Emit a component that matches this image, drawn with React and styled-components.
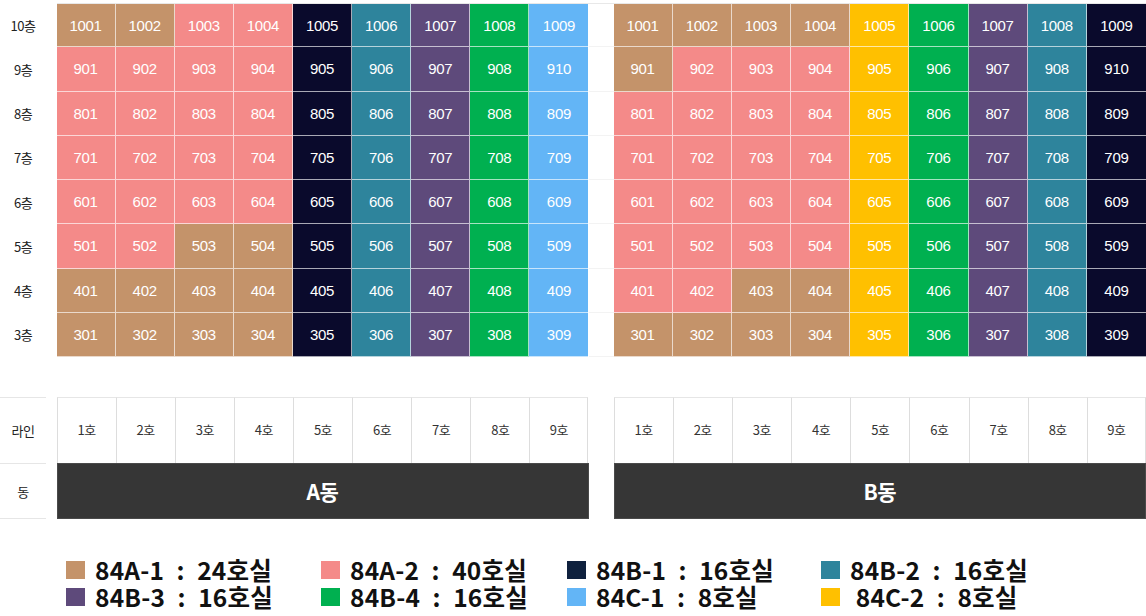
import React from "react";
import styled, { createGlobalStyle } from "styled-components";

const GlobalStyle = createGlobalStyle`
  html, body { margin: 0; padding: 0; background: #ffffff; }
  body { font-family: "Noto Sans CJK KR", "Noto Sans", sans-serif; }
`;

const COLORS = {
  A1: "#c4936a",
  A2: "#f48a89",
  B1: "#0a0a2c",
  B2: "#2e849c",
  B3: "#5e4a7b",
  B4: "#00b050",
  C1: "#63b5f6",
  C2: "#ffc000",
};

const SWATCH_COLORS = { ...COLORS, B1: "#0f213e" };

const COLS = "46px 10.5px 532px 25px 532.5px";

const Page = styled.div`
  width: 1146px;
  padding-top: 3px;
`;

const Row = styled.div`
  display: grid;
  grid-template-columns: ${COLS};
  height: ${(p) => p.$h}px;
`;

const Label = styled.div`
  display: flex;
  align-items: center;
  justify-content: center;
  font-size: 13px;
  color: #222;
  letter-spacing: -0.5px;
  border-top: ${(p) => (p.$lined ? "1px solid #e6e6e6" : "none")};
  border-bottom: ${(p) => (p.$bottom ? "1px solid #e6e6e6" : "none")};
  box-sizing: border-box;
`;

const Gap = styled.div`
  box-sizing: border-box;
  border-top: ${(p) => (p.$top ? "1px solid #e8e8e8" : "none")};
  border-bottom: ${(p) => (p.$faint ? "1px solid #f3f3f3" : "none")};
`;

const Units = styled.div`
  display: grid;
  grid-template-columns: repeat(9, 1fr);
  box-sizing: border-box;
  border-top: ${(p) => (p.$top ? "1px solid #e8e8e8" : "none")};
`;

const Unit = styled.div`
  display: flex;
  align-items: center;
  justify-content: center;
  background: ${(p) => COLORS[p.$type]};
  color: #ffffff;
  font-family: "Liberation Sans", Arial, sans-serif;
  font-size: 15px;
  letter-spacing: -0.3px;
  box-sizing: border-box;
  border-right: 1px solid rgba(255, 255, 255, 0.65);
  border-bottom: 1px solid rgba(255, 255, 255, 0.65);
  &:last-child { border-right: none; }
`;

const Spacer = styled.div`
  height: 39.5px;
`;

const LineCell = styled.div`
  display: flex;
  align-items: center;
  justify-content: center;
  font-size: 13px;
  color: #333;
  letter-spacing: -0.5px;
  padding-bottom: 1px;
  box-sizing: border-box;
  border-top: 1px solid #e6e6e6;
  border-left: 1px solid #dddddd;
  &:last-child { border-right: 1px solid #dddddd; }
`;

const DongBar = styled.div`
  display: flex;
  align-items: center;
  justify-content: center;
  background: #363636;
  border: 1px solid #4a4a4a;
  box-sizing: border-box;
  color: #ffffff;
  font-size: 21px;
  font-weight: 700;
  letter-spacing: -0.5px;
`;

const Legend = styled.div`
  display: grid;
  grid-template-columns: 255px 246px 254px auto;
  grid-auto-rows: 27px;
  padding: 37px 0 0 66px;
`;

const LegendItem = styled.div`
  display: flex;
  align-items: center;
  gap: 10px;
`;

const Swatch = styled.span`
  width: 19px;
  height: 18px;
  background: ${(p) => SWATCH_COLORS[p.$type]};
  flex: none;
`;

const LegendText = styled.span`
  font-size: 24.5px;
  font-weight: 700;
  color: #111;
  line-height: 26px;
  letter-spacing: 0.2px;
  white-space: pre;
`;

const A_ROWS = [
  ["10", ["1001", "1002", "1003", "1004", "1005", "1006", "1007", "1008", "1009"], ["A1", "A1", "A2", "A2", "B1", "B2", "B3", "B4", "C1"]],
  ["9", ["901", "902", "903", "904", "905", "906", "907", "908", "910"], ["A2", "A2", "A2", "A2", "B1", "B2", "B3", "B4", "C1"]],
  ["8", ["801", "802", "803", "804", "805", "806", "807", "808", "809"], ["A2", "A2", "A2", "A2", "B1", "B2", "B3", "B4", "C1"]],
  ["7", ["701", "702", "703", "704", "705", "706", "707", "708", "709"], ["A2", "A2", "A2", "A2", "B1", "B2", "B3", "B4", "C1"]],
  ["6", ["601", "602", "603", "604", "605", "606", "607", "608", "609"], ["A2", "A2", "A2", "A2", "B1", "B2", "B3", "B4", "C1"]],
  ["5", ["501", "502", "503", "504", "505", "506", "507", "508", "509"], ["A2", "A2", "A1", "A1", "B1", "B2", "B3", "B4", "C1"]],
  ["4", ["401", "402", "403", "404", "405", "406", "407", "408", "409"], ["A1", "A1", "A1", "A1", "B1", "B2", "B3", "B4", "C1"]],
  ["3", ["301", "302", "303", "304", "305", "306", "307", "308", "309"], ["A1", "A1", "A1", "A1", "B1", "B2", "B3", "B4", "C1"]],
];

const B_TYPES = [
  ["A1", "A1", "A1", "A1", "C2", "B4", "B3", "B2", "B1"],
  ["A1", "A2", "A2", "A2", "C2", "B4", "B3", "B2", "B1"],
  ["A2", "A2", "A2", "A2", "C2", "B4", "B3", "B2", "B1"],
  ["A2", "A2", "A2", "A2", "C2", "B4", "B3", "B2", "B1"],
  ["A2", "A2", "A2", "A2", "C2", "B4", "B3", "B2", "B1"],
  ["A2", "A2", "A2", "A2", "C2", "B4", "B3", "B2", "B1"],
  ["A2", "A2", "A1", "A1", "C2", "B4", "B3", "B2", "B1"],
  ["A1", "A1", "A1", "A1", "C2", "B4", "B3", "B2", "B1"],
];

const SEP = "\u2002:\u2002";

const LEGEND = [
  ["A1", `84A-1${SEP}24호실`],
  ["A2", `84A-2${SEP}40호실`],
  ["B1", `84B-1${SEP}16호실`],
  ["B2", `84B-2${SEP}16호실`],
  ["B3", `84B-3${SEP}16호실`],
  ["B4", `84B-4${SEP}16호실`],
  ["C1", `84C-1${SEP}8호실`],
  ["C2", ` 84C-2${SEP}8호실`],
];

const LINES = ["1호", "2호", "3호", "4호", "5호", "6호", "7호", "8호", "9호"];

export default function App() {
  return (
    <Page>
      <GlobalStyle />
      {A_ROWS.map(([floor, nums, aTypes], i) => (
        <Row key={floor} $h={44.25}>
          <Label>{floor}층</Label>
          <Gap />
          <Units $top={i === 0}>
            {nums.map((n, j) => (
              <Unit key={n} $type={aTypes[j]}>{n}</Unit>
            ))}
          </Units>
          <Gap $top={i === 0} $faint />
          <Units $top={i === 0}>
            {nums.map((n, j) => (
              <Unit key={n} $type={B_TYPES[i][j]}>{n}</Unit>
            ))}
          </Units>
        </Row>
      ))}
      <Spacer />
      <Row $h={66.5}>
        <Label $lined>라인</Label>
        <Gap />
        <Units>
          {LINES.map((l) => <LineCell key={l}>{l}</LineCell>)}
        </Units>
        <Gap />
        <Units>
          {LINES.map((l) => <LineCell key={l}>{l}</LineCell>)}
        </Units>
      </Row>
      <Row $h={56}>
        <Label $lined $bottom>동</Label>
        <Gap />
        <DongBar>A동</DongBar>
        <Gap />
        <DongBar>B동</DongBar>
      </Row>
      <Legend>
        {LEGEND.map(([t, text]) => (
          <LegendItem key={t}>
            <Swatch $type={t} />
            <LegendText>{text}</LegendText>
          </LegendItem>
        ))}
      </Legend>
    </Page>
  );
}
